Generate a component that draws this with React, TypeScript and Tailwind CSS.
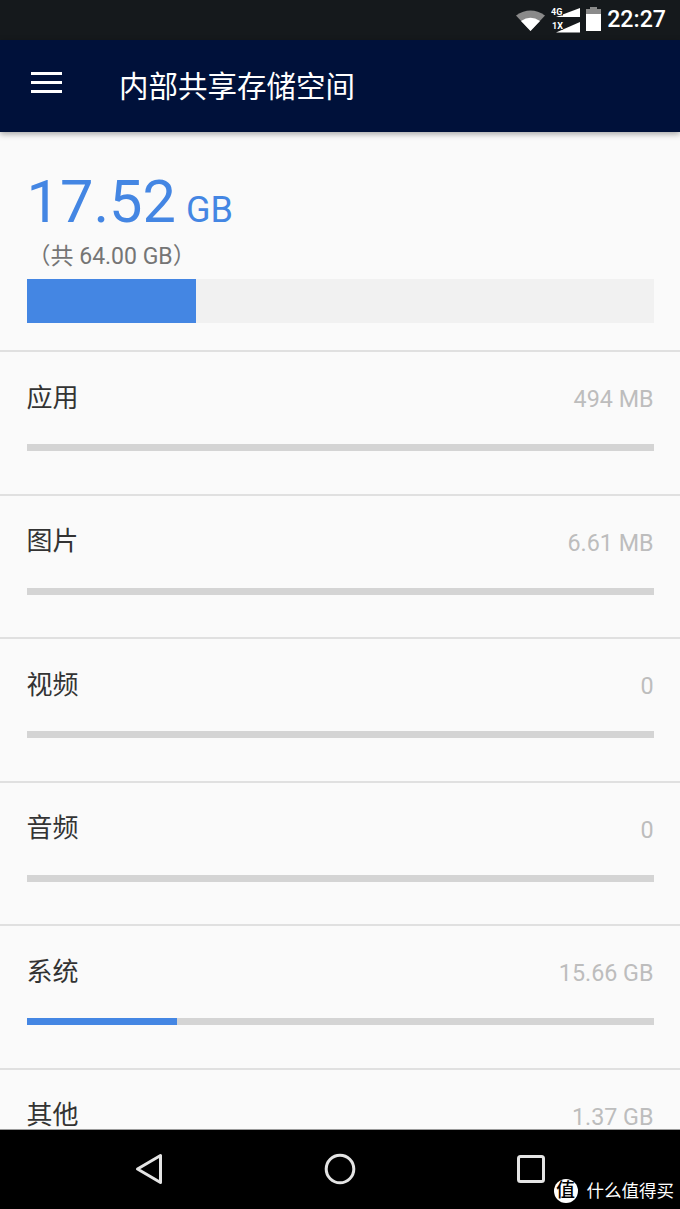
const SANS = '[font-family:Roboto,"Noto_Sans_CJK_SC",sans-serif]';

const ROWS = [
  { label: '应用', size: '494 MB', used: 0 },
  { label: '图片', size: '6.61 MB', used: 0 },
  { label: '视频', size: '0', used: 0 },
  { label: '音频', size: '0', used: 0 },
  { label: '系统', size: '15.66 GB', used: 24 },
  { label: '其他', size: '1.37 GB', used: 0 },
];

function StatusBar() {
  return (
    <div className="h-10 shrink-0 bg-[#15191c] flex items-center justify-end gap-[6px] pr-[14px] text-white">
      {/* wifi */}
      <svg width="29" height="22" viewBox="0 0 29 22">
        <path d="M0 6.500 Q14.500 -3.500 29 6.500 L14.500 22 Z" fill="#8a8a8a" />
        <path d="M5 12 Q14.500 5.500 24 12 L14.500 22 Z" fill="#fff" />
      </svg>
      {/* signal, 4G + 1X */}
      <svg width="29" height="25" viewBox="0 0 29 25">
        <path d="M29 0 V9 H5 Z" fill="#fff" />
        <path d="M29 14 V24.500 H5 Z" fill="#fff" />
        <rect x="0" y="0" width="12" height="7.500" fill="#15191c" />
        <rect x="0" y="14" width="12" height="7.500" fill="#15191c" />
        <text x="0" y="7" fontSize="9" fontWeight="700" fill="#fff" fontFamily="Roboto">4G</text>
        <text x="1" y="21" fontSize="9" fontWeight="700" fill="#fff" fontFamily="Roboto">1X</text>
      </svg>
      {/* battery */}
      <svg width="15" height="24" viewBox="0 0 15 24" className="mb-[2px]">
        <path d="M4.500 0 H10.500 V2 H15 V24 H0 V2 H4.500 Z" fill="#fff" />
        <path d="M4.500 0 H10.500 V2 H15 V7 H0 V2 H4.500 Z" fill="#8a8a8a" />
      </svg>
      <span className={`${SANS} text-[23.200px] leading-none font-medium`}>22:27</span>
    </div>
  );
}

function AppBar() {
  return (
    <div className="relative z-10 h-[92px] shrink-0 bg-[#00113a] flex items-start shadow-[0_2px_6px_rgba(0,0,0,0.35)]">
      <div className="ml-[31px] mt-[32px] w-[31px] flex flex-col gap-[6px]">
        <div className="h-[3px] bg-white" />
        <div className="h-[3px] bg-white" />
        <div className="h-[3px] bg-white" />
      </div>
      <h1 className={`${SANS} ml-[57px] mt-[29px] text-[29.500px] leading-9 text-white font-normal`}>内部共享存储空间</h1>
    </div>
  );
}

function Summary() {
  return (
    <div className="h-[218px] shrink-0 px-[26.500px] pt-[34px]">
      <div className={`${SANS} flex items-baseline h-[72px] text-[#4486e3]`}>
        <span className="text-[59.500px] leading-[72px]">17.52</span>
        <span className="ml-[10px] text-[36px] leading-none">GB</span>
      </div>
      <div className={`${SANS} ml-[1px] mt-[1px] h-[36px] text-[23px] leading-[36px] text-[#757575]`}>（共 64.00 GB）</div>
      <div className="mt-[4px] h-[44px] bg-[#f1f1f1]">
        <div className="h-full w-[27%] bg-[#4486e3]" />
      </div>
    </div>
  );
}

function StorageRow({ label, size, used }: { label: string; size: string; used: number }) {
  return (
    <div className="h-[143.600px] shrink-0 border-t-2 border-[#e0e0e0] px-[26.500px] pt-[28px]">
      <div className={`${SANS} flex items-center justify-between h-9`}>
        <span className="text-[26px] text-[#333333]">{label}</span>
        <span className="text-[23.300px] text-[#bdbdbd] pt-[3px]">{size}</span>
      </div>
      <div className="mt-[28px] h-[7px] bg-[#d4d4d4]">
        {used > 0 && <div className="h-full bg-[#4486e3]" style={{ width: `${used}%` }} />}
      </div>
    </div>
  );
}

function NavBar() {
  return (
    <div className="relative z-10 h-[80px] shrink-0 bg-black border-t border-[#9a9a9a] flex items-center">
      <div className="w-full flex items-center justify-between pl-[135px] pr-[135px] -mt-[2px]">
        <svg width="28" height="32" viewBox="0 0 28 32">
          <path d="M25.500 2.500 V29.500 L2.500 16 Z" fill="none" stroke="#e4e4e4" strokeWidth="3" strokeLinejoin="round" />
        </svg>
        <svg width="32" height="32" viewBox="0 0 32 32">
          <circle cx="16" cy="16" r="13.800" fill="none" stroke="#e4e4e4" strokeWidth="3" />
        </svg>
        <svg width="28" height="28" viewBox="0 0 28 28">
          <rect x="1.500" y="1.500" width="25" height="25" rx="2" fill="none" stroke="#e4e4e4" strokeWidth="3" />
        </svg>
      </div>
      {/* watermark */}
      <div className="absolute right-[6px] bottom-[6px] flex items-center gap-[9px]">
        <div className={`${SANS} w-6 h-6 rounded-full bg-white text-black text-[19px] leading-6 text-center font-medium`}>值</div>
        <span className={`${SANS} text-[17.500px] leading-6 text-white`}>什么值得买</span>
      </div>
    </div>
  );
}

export default function App() {
  return (
    <div className="w-[680px] h-[1209px] flex flex-col overflow-hidden bg-[#fafafa]">
      <StatusBar />
      <AppBar />
      <div className="flex-1 min-h-0 overflow-hidden">
        <Summary />
        {ROWS.map((row) => (
          <StorageRow key={row.label} {...row} />
        ))}
      </div>
      <NavBar />
    </div>
  );
}
